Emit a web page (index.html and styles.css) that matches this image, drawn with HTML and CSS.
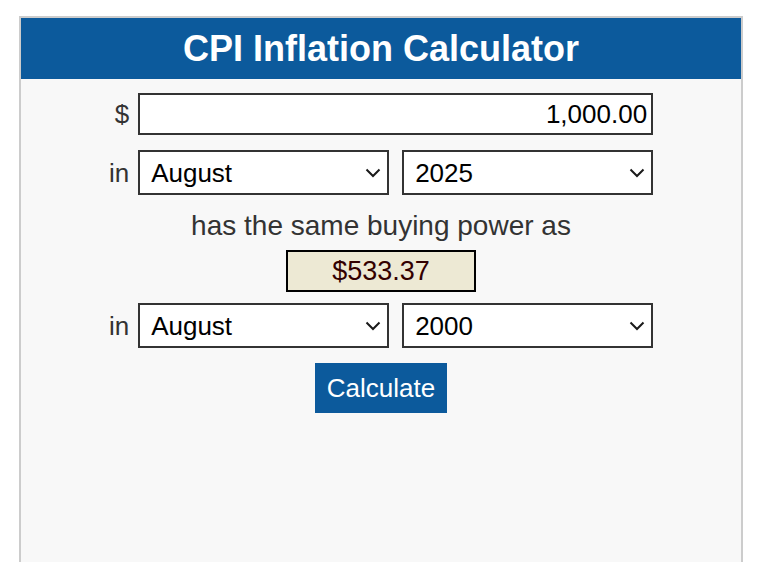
FILE: index.html
```html
<!DOCTYPE html>
<html lang="en">
<head>
<meta charset="utf-8">
<title>CPI Inflation Calculator</title>
<link rel="stylesheet" href="styles.css">
</head>
<body>
<div class="panel">
  <h1 class="title">CPI Inflation Calculator</h1>
  <form class="calc">
    <label class="lbl" for="amount">$</label>
    <input class="amount" id="amount" type="text" value="1,000.00">

    <span class="lbl lbl-1">in</span>
    <div class="pair pair-1">
      <div class="sel-wrap">
        <select class="sel"><option>August</option></select>
        <svg class="chev" width="16" height="10" viewBox="0 0 16 10"><polyline points="1.5,1.5 8,8 14.5,1.5" fill="none" stroke="#1a1a1a" stroke-width="2"/></svg>
      </div>
      <div class="sel-wrap">
        <select class="sel"><option>2025</option></select>
        <svg class="chev" width="16" height="10" viewBox="0 0 16 10"><polyline points="1.5,1.5 8,8 14.5,1.5" fill="none" stroke="#1a1a1a" stroke-width="2"/></svg>
      </div>
    </div>

    <p class="same">has the same buying power as</p>
    <div class="result">$533.37</div>

    <span class="lbl lbl-2">in</span>
    <div class="pair pair-2">
      <div class="sel-wrap">
        <select class="sel"><option>August</option></select>
        <svg class="chev" width="16" height="10" viewBox="0 0 16 10"><polyline points="1.5,1.5 8,8 14.5,1.5" fill="none" stroke="#1a1a1a" stroke-width="2"/></svg>
      </div>
      <div class="sel-wrap">
        <select class="sel"><option>2000</option></select>
        <svg class="chev" width="16" height="10" viewBox="0 0 16 10"><polyline points="1.5,1.5 8,8 14.5,1.5" fill="none" stroke="#1a1a1a" stroke-width="2"/></svg>
      </div>
    </div>

    <button class="btn" type="button">Calculate</button>
  </form>
</div>
</body>
</html>
```

FILE: styles.css
```css
* { box-sizing: border-box; }

html, body {
  margin: 0;
  padding: 0;
  background: #ffffff;
  font-family: "Liberation Sans", Arial, Helvetica, sans-serif;
}

body {
  padding: 16px 0 0 19px;
}

.panel {
  width: 724px;
  height: 546px;
  border: 2px solid #cccccc;
  border-bottom: none;
  background: #f8f8f8;
}

.title {
  margin: 0;
  height: 61px;
  line-height: 61px;
  background: #0c5a9c;
  color: #ffffff;
  font-size: 36px;
  font-weight: bold;
  text-align: center;
}

.calc {
  display: grid;
  grid-template-columns: auto 515px;
  column-gap: 9px;
  justify-content: center;
  padding: 14px 0 0 0;
}

.lbl {
  align-self: center;
  text-align: right;
  font-size: 26px;
  line-height: 42px;
  color: #333333;
}

.lbl-1, .lbl-2 {
  line-height: 43px;
  padding-top: 2px;
}

.amount {
  width: 515px;
  height: 42px;
  margin: 0;
  border: 2px solid #333333;
  border-radius: 0;
  background: #ffffff;
  padding: 0 4px;
  font-family: inherit;
  font-size: 26px;
  color: #000000;
  text-align: right;
  outline: none;
}

.pair {
  display: flex;
  gap: 13px;
}

.lbl-1, .pair-1 { margin-top: 15px; }
.lbl-2, .pair-2 { margin-top: 11px; }

.sel-wrap {
  position: relative;
  width: 251px;
}

.sel {
  -webkit-appearance: none;
  appearance: none;
  display: block;
  width: 251px;
  height: 45px;
  margin: 0;
  border: 2px solid #333333;
  border-radius: 0;
  background: #ffffff;
  padding: 0 30px 0 11px;
  font-family: inherit;
  font-size: 26px;
  color: #000000;
  outline: none;
}

.chev {
  position: absolute;
  right: 8px;
  top: 18px;
  pointer-events: none;
}

.same {
  grid-column: 1 / -1;
  margin: 15px 0 0;
  text-align: center;
  font-size: 28px;
  line-height: 32px;
  color: #333333;
}

.result {
  grid-column: 1 / -1;
  justify-self: center;
  width: 190px;
  height: 42px;
  margin-top: 8px;
  border: 2px solid #000000;
  background: #ede9d4;
  color: #330000;
  font-size: 27px;
  line-height: 38px;
  text-align: center;
}

.btn {
  grid-column: 1 / -1;
  justify-self: center;
  width: 132px;
  height: 50px;
  margin-top: 15px;
  padding: 0;
  border: none;
  border-radius: 0;
  background: #0c5a9c;
  color: #ffffff;
  font-family: inherit;
  font-size: 26px;
}
```
